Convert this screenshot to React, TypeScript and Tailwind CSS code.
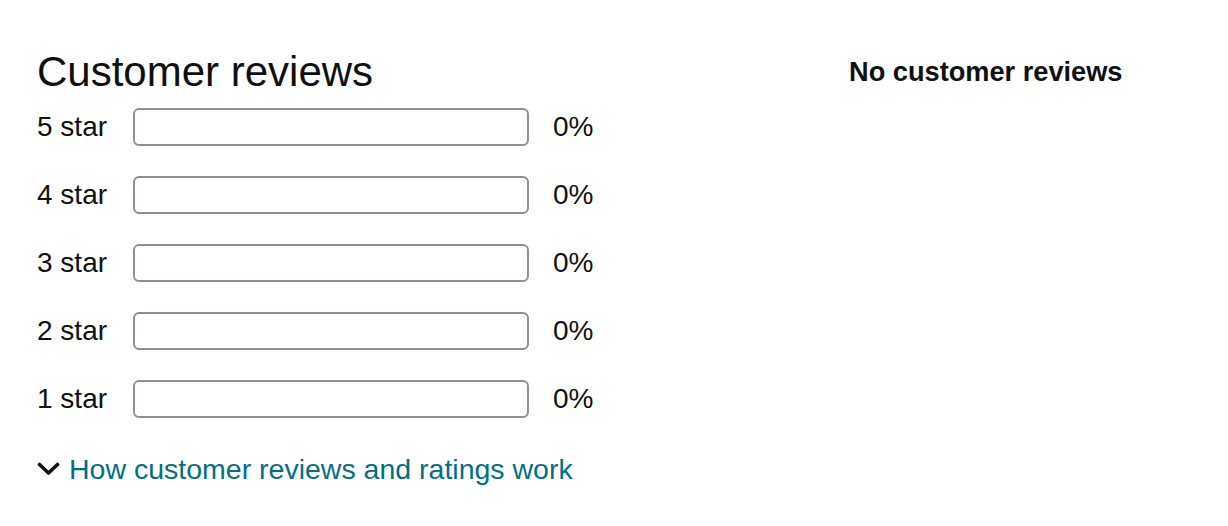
const rows = [5, 4, 3, 2, 1];

function Chevron() {
  return (
    <svg width="23" height="14" viewBox="0 0 23 14" className="shrink-0">
      <path d="M2.5 2.5 L11.5 11 L20.5 2.5" fill="none" stroke="#111" strokeWidth="3.6" strokeLinecap="round" strokeLinejoin="round" />
    </svg>
  );
}

export default function App() {
  return (
    <div className="flex w-[1228px] h-[526px] bg-white text-[#0f1111] font-['Liberation_Sans',Arial,sans-serif]">
      <div className="pl-[37px] pt-[47px] w-[700px]">
        <h2 className="text-[42px] leading-[50px] mb-[11px]">Customer reviews</h2>
        {rows.map((n) => (
          <div key={n} className="flex items-center h-[38px] mb-[30px] text-[28px]">
            <span className="w-[96px]">{n} star</span>
            <div className="w-[396px] h-[38px] rounded-[6px] border-2 border-[#8d9096] bg-white" />
            <span className="ml-[24px]">0%</span>
          </div>
        ))}
        <a href="#" className="flex items-center gap-[9px] mt-[30px] text-[28.5px] text-[#007185]">
          <Chevron />
          How customer reviews and ratings work
        </a>
      </div>
      <div className="pl-[149px] pt-[56px]">
        <p className="text-[27.2px] font-bold leading-[32px]">No customer reviews</p>
      </div>
    </div>
  );
}
